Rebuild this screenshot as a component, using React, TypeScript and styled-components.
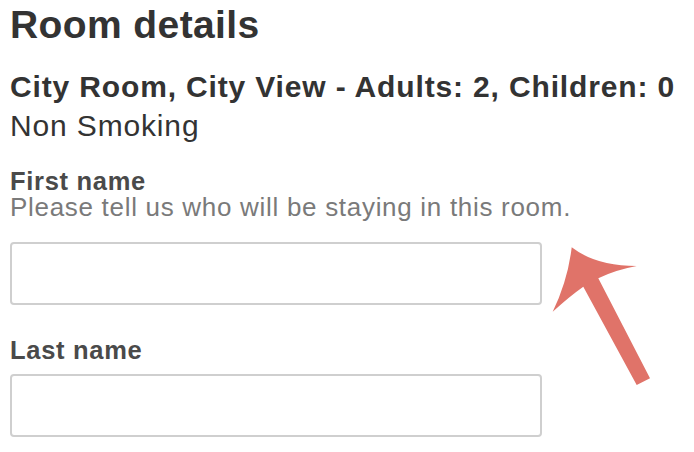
import React from "react";
import styled, { createGlobalStyle } from "styled-components";

const GlobalStyle = createGlobalStyle`
  html, body {
    margin: 0;
    padding: 0;
    background: #fff;
  }
  body {
    font-family: "Liberation Sans", Arial, Helvetica, sans-serif;
    color: #333;
  }
`;

const Page = styled.div`
  position: relative;
  width: 694px;
  height: 452px;
  overflow: hidden;
  box-sizing: border-box;
  padding: 2px 0 0 10px;
`;

const Title = styled.h1`
  margin: 0 0 19px;
  font-size: 39px;
  line-height: 46px;
  font-weight: 700;
  letter-spacing: 0.4px;
  color: #333;
`;

const RoomInfo = styled.div`
  font-size: 30px;
  line-height: 39px;
  letter-spacing: 0.85px;
  color: #333;
`;

const RoomName = styled.div`
  font-weight: 700;
`;

const Field = styled.div<{ $gap: number }>`
  margin-top: ${(p) => p.$gap}px;
  display: flex;
  flex-direction: column;
`;

const Label = styled.label`
  font-size: 25.5px;
  line-height: 26px;
  font-weight: 700;
  letter-spacing: 0.7px;
  color: #4a4a4a;
`;

const Hint = styled.div`
  font-size: 26px;
  line-height: 26px;
  letter-spacing: 0.7px;
  color: #7a7a7a;
`;

const Input = styled.input<{ $gap: number }>`
  display: block;
  box-sizing: border-box;
  margin-top: ${(p) => p.$gap}px;
  width: 532px;
  height: 63px;
  border: 2px solid #cfcfcf;
  border-radius: 4px;
  background: #fff;
  outline: none;
  padding: 0 12px;
  font: inherit;
  font-size: 24px;
`;

const ArrowSvg = styled.svg`
  position: absolute;
  left: 540px;
  top: 240px;
  width: 120px;
  height: 150px;
`;

const PointerArrow = () => (
  <ArrowSvg viewBox="0 0 120 150">
    <path
      fill="#e07369"
      d="M31.7 7.3 Q56 26 96.7 26 Q75 30 58.3 38.3 L110 138.3 L96.7 145 L43.3 46.7 Q30 56 12.7 71.7 Q27.8 40.6 31.7 7.3 Z"
    />
  </ArrowSvg>
);

export default function App() {
  return (
    <Page>
      <GlobalStyle />
      <Title>Room details</Title>
      <RoomInfo>
        <RoomName>City Room, City View - Adults: 2, Children: 0</RoomName>
        <div>Non Smoking</div>
      </RoomInfo>
      <Field $gap={23}>
        <Label htmlFor="first-name">First name</Label>
        <Hint>Please tell us who will be staying in this room.</Hint>
        <Input id="first-name" type="text" $gap={22} />
      </Field>
      <Field $gap={32}>
        <Label htmlFor="last-name">Last name</Label>
        <Input id="last-name" type="text" $gap={11} />
      </Field>
      <PointerArrow />
    </Page>
  );
}
